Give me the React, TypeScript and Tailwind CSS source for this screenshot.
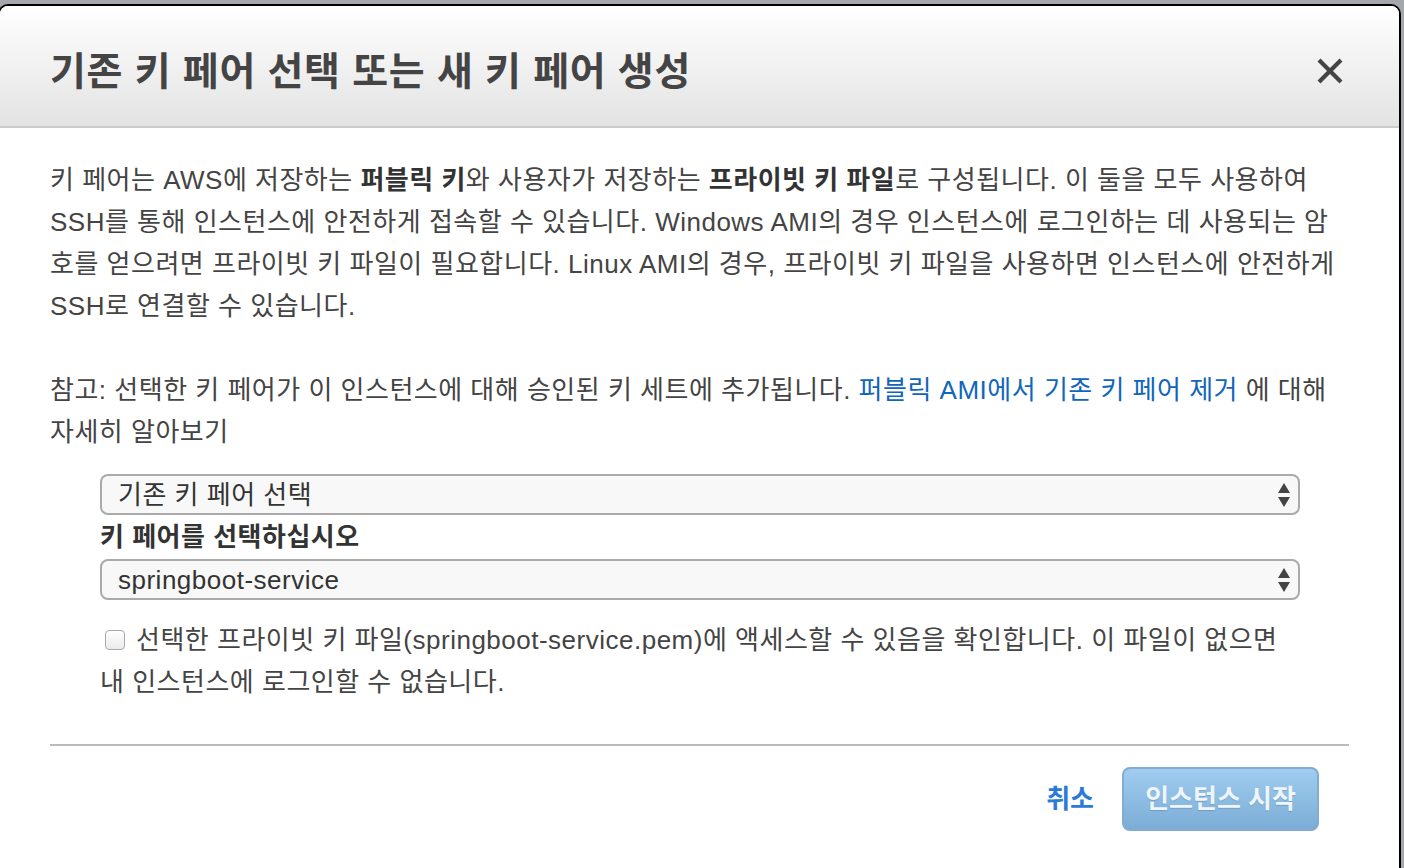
import React from "react";

const font = { fontFamily: '"Liberation Sans", "Noto Sans CJK KR", sans-serif' };

function Arrows() {
  return (
    <svg width="14" height="26" viewBox="0 0 14 26" className="shrink-0">
      <polygon points="7,1 13,11 1,11" fill="#444" />
      <polygon points="1,15 13,15 7,25" fill="#444" />
    </svg>
  );
}

function Select({ label }: { label: string }) {
  return (
    <div className="w-[1200px] h-[41px] rounded-[8px] border-2 border-[#aaaaaa] bg-[#f8f8f8] flex items-center justify-between pl-[16px] pr-[7px]">
      <span className="text-[26px] leading-none text-[#333] tracking-[0.5px]">{label}</span>
      <Arrows />
    </div>
  );
}

export default function App() {
  return (
    <div className="w-[1404px] h-[868px] bg-[#a4a7ac] overflow-hidden pt-[4px]" style={font}>
      <div className="ml-[-2px] w-[1403px] h-[900px] bg-white border-2 border-black rounded-t-[10px] overflow-hidden">
        <div className="h-[122px] bg-gradient-to-b from-white to-[#e3e3e3] border-b-2 border-[#cccccc] flex items-center justify-between pt-[10px] pl-[50px] pr-[55px]">
          <h1 className="text-[39px] font-bold text-[#444] leading-none whitespace-nowrap tracking-[0.7px]">
            기존 키 페어 선택 또는 새 키 페어 생성
          </h1>
          <svg width="28" height="28" viewBox="0 0 28 28">
            <path d="M3 3 L25 25 M25 3 L3 25" stroke="#444" strokeWidth="4.2" strokeLinecap="butt" />
          </svg>
        </div>

        <div className="px-[50px] text-[26px] leading-[42px] text-[#444] tracking-[0.5px]">
          <div className="mt-[31px] whitespace-nowrap">
            <div>
              키 페어는 AWS에 저장하는 <b className="text-[#333]">퍼블릭 키</b>와 사용자가 저장하는{" "}
              <b className="text-[#333]">프라이빗 키 파일</b>로 구성됩니다. 이 둘을 모두 사용하여
            </div>
            <div>SSH를 통해 인스턴스에 안전하게 접속할 수 있습니다. Windows AMI의 경우 인스턴스에 로그인하는 데 사용되는 암</div>
            <div>호를 얻으려면 프라이빗 키 파일이 필요합니다. Linux AMI의 경우, 프라이빗 키 파일을 사용하면 인스턴스에 안전하게</div>
            <div>SSH로 연결할 수 있습니다.</div>
          </div>

          <div className="mt-[42px] whitespace-nowrap">
            <div>
              참고: 선택한 키 페어가 이 인스턴스에 대해 승인된 키 세트에 추가됩니다.{" "}
              <a className="text-[#1166bb]">퍼블릭 AMI에서 기존 키 페어 제거</a> 에 대해
            </div>
            <div>자세히 알아보기</div>
          </div>

          <div className="mt-[21px] pl-[50px]">
            <Select label="기존 키 페어 선택" />
          </div>
          <div className="h-[44px] flex items-center pl-[50px] text-[26px] font-bold text-[#333]">
            키 페어를 선택하십시오
          </div>
          <div className="pl-[50px]">
            <Select label="springboot-service" />
          </div>

          <div className="mt-[19px] pl-[50px] whitespace-nowrap">
            <div className="flex items-center">
              <span className="inline-block w-[20px] h-[20px] rounded-[4px] border border-[#a8a8a8] bg-gradient-to-b from-white to-[#ebebeb] ml-[5px] mr-[11px] shrink-0"></span>
              <span>선택한 프라이빗 키 파일(springboot-service.pem)에 액세스할 수 있음을 확인합니다. 이 파일이 없으면</span>
            </div>
            <div>내 인스턴스에 로그인할 수 없습니다.</div>
          </div>

          <div className="mt-[41px] h-[2px] bg-[#bbbbbb]"></div>
        </div>

        <div className="mt-[21px] flex items-center justify-end pr-[80px] gap-[28px]">
          <span className="text-[26px] font-bold text-[#2b7bd6]">취소</span>
          <button className="w-[197px] h-[64px] rounded-[8px] border-2 border-[#82acd2] bg-gradient-to-b from-[#a0cdf0] to-[#7cadd6] text-[26px] font-bold text-[#eef5fb] [text-shadow:0_1px_1px_rgba(0,0,0,0.15)]">
            인스턴스 시작
          </button>
        </div>
      </div>
    </div>
  );
}
